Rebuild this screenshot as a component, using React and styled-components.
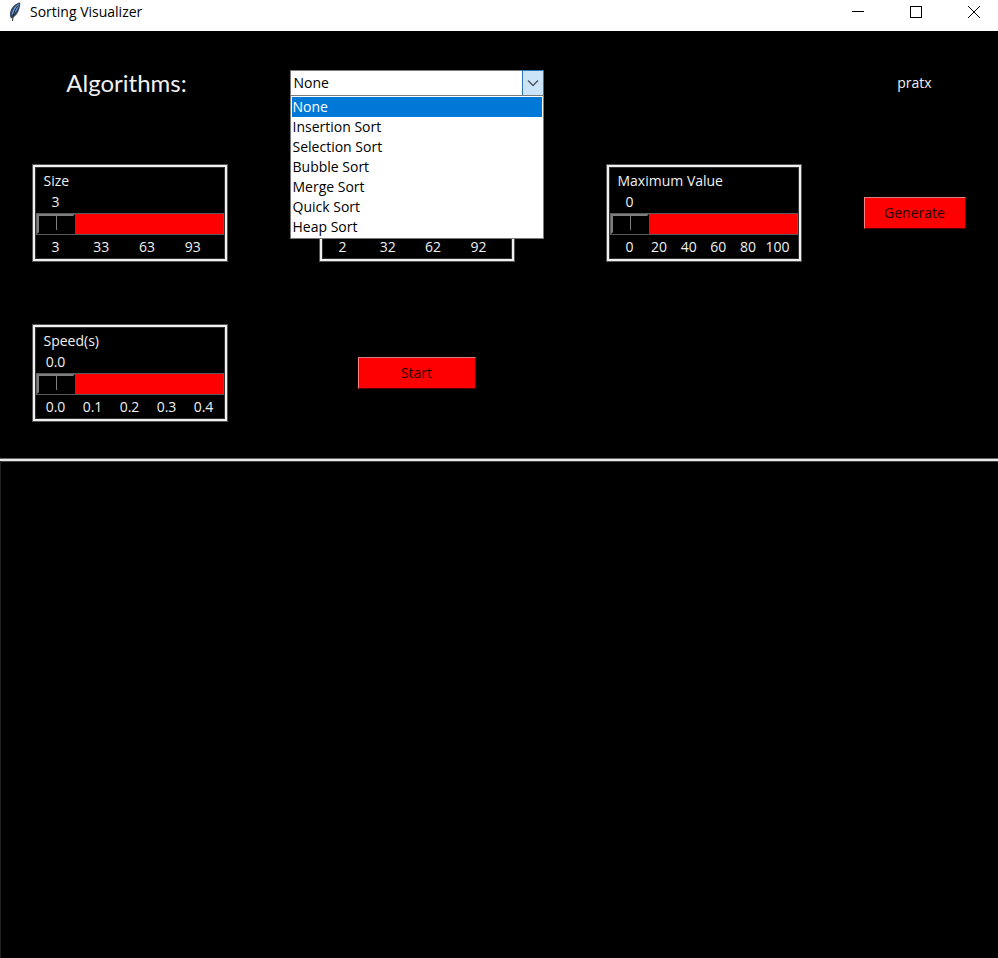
import React, { useState } from "react";
import styled, { createGlobalStyle } from "styled-components";

const GlobalStyle = createGlobalStyle`
  *, *::before, *::after { box-sizing: border-box; }
  html, body { margin: 0; background: #000; }
  body { font-family: "Open Sans", "Noto Sans", sans-serif; font-size: 14px; line-height: 20px; }
`;

const Window = styled.div`
  min-height: 100vh;
  display: flex;
  flex-direction: column;
  background: #000;
  color: #f0f0f0;
`;

const TitleBar = styled.header`
  display: flex;
  align-items: center;
  height: 31px;
  padding: 0 0 7px 8px;
  gap: 8px;
  background: #fff;
  color: #000;
`;

const Title = styled.h1`
  flex: 1;
  margin: 0;
  font-size: 14px;
  font-weight: 400;
  line-height: 20px;
`;

const WindowButton = styled.button`
  display: grid;
  place-items: center;
  width: 48px;
  height: 24px;
  margin-left: 2px;
  padding: 0;
  border: 0;
  background: none;
`;

const Controls = styled.main`
  display: grid;
  grid-template-columns: 259fr 315fr 259fr 163fr;
  grid-template-rows: 100px 160px 160px;
  place-items: center;
  padding: 2px 2px 6px 0;
  border-bottom: 2px solid #e8e8e8;
  box-shadow: inset 0 -1px #666, 0 1px #444;
`;

const Heading = styled.label`
  padding-right: 6px;
  font-family: Lato, Carlito, sans-serif;
  font-size: 24px;
  line-height: 28px;
`;

const Combo = styled.div`
  position: relative;
  width: 254px;
`;

const ComboSelect = styled.select`
  display: block;
  width: 100%;
  height: 26px;
  padding: 0 32px 0 3px;
  appearance: none;
  border: 1px solid #7a7a7a;
  border-radius: 0;
  outline: 0;
  background: #fff;
  color: #000;
  font: inherit;
`;

const ComboArrow = styled.span`
  position: absolute;
  top: 0;
  right: 0;
  display: grid;
  place-items: center;
  width: 22px;
  height: 26px;
  border: 1px solid #2a74b8;
  background: #cce4f7;
  pointer-events: none;
`;

const Options = styled.ul`
  position: absolute;
  z-index: 1;
  top: 25px;
  left: 0;
  right: 0;
  margin: 0;
  padding: 1px;
  list-style: none;
  border: 1px solid #7a7a7a;
  background: #fff;
  color: #000;
`;

const Option = styled.li`
  height: 20px;
  padding: 0 1px;
  line-height: 20px;
  background: ${(p) => (p["aria-selected"] ? "#0078d7" : "transparent")};
  color: ${(p) => (p["aria-selected"] ? "#fff" : "#000")};
`;

const Author = styled.p`
  margin: 0;
`;

const ScaleCard = styled.div`
  display: flex;
  flex-direction: column;
  width: 194px;
  height: 96px;
  padding: 2px 1px 0;
  border: 2px solid #f0f0f0;
  box-shadow: 0 0 0 1px #555, inset 0 0 0 1px #333;
`;

const ScaleLabel = styled.label`
  padding: 2px 8px 0;
  line-height: 20px;
  visibility: ${(p) => (p.$covered ? "hidden" : "visible")};
`;

const Rail = styled.div`
  display: flex;
  margin: 0 20px;
  line-height: ${(p) => p.$height}px;
  visibility: ${(p) => (p.$covered ? "hidden" : "visible")};
`;

const Mark = styled.output`
  display: flex;
  justify-content: center;
  width: 0;
  white-space: nowrap;
`;

const Slider = styled.input`
  appearance: none;
  display: block;
  width: 100%;
  height: 22px;
  margin: 0;
  border: 1px solid #5a5a5a;
  background: #f00;
  outline: 0;

  &::-webkit-slider-thumb {
    appearance: none;
    width: 38px;
    height: 20px;
    border: 2px solid #000;
    border-top-color: #7f7f7f;
    border-left-color: #7f7f7f;
    border-radius: 0;
    background: linear-gradient(#7f7f7f, #7f7f7f) 17px 0 / 1px 14px no-repeat #000;
  }
`;

const ActionButton = styled.button`
  width: ${(p) => p.$width}px;
  height: 32px;
  padding: 0;
  border: 1px solid #500;
  border-top-color: #d08080;
  border-left-color: #ff8080;
  border-radius: 0;
  background: #f00;
  color: #200;
  font: inherit;
`;

const Canvas = styled.section`
  flex: 1;
  border-left: 1px solid #202020;
`;

const algorithms = [
  "None",
  "Insertion Sort",
  "Selection Sort",
  "Bubble Sort",
  "Merge Sort",
  "Quick Sort",
  "Heap Sort",
];

function Scale({ id, label, min, max, step = 1, ticks, digits = 0, covered = false }) {
  const [value, setValue] = useState(min);
  const span = max - min;
  return (
    <ScaleCard>
      <ScaleLabel htmlFor={id} $covered={covered}>{label}</ScaleLabel>
      <Rail $height={22} $covered={covered}>
        <Mark htmlFor={id} style={{ marginLeft: `${((value - min) / span) * 100}%` }}>
          {value.toFixed(digits)}
        </Mark>
      </Rail>
      <Slider
        id={id}
        type="range"
        min={min}
        max={max}
        step={step}
        value={value}
        onChange={(e) => setValue(Number(e.target.value))}
      />
      <Rail $height={24}>
        {ticks.map((tick, i) => (
          <Mark
            as="span"
            key={tick}
            style={{ marginLeft: i ? `${((tick - ticks[i - 1]) / span) * 100}%` : 0 }}
          >
            {tick.toFixed(digits)}
          </Mark>
        ))}
      </Rail>
    </ScaleCard>
  );
}

function Feather() {
  return (
    <svg width="14" height="20" viewBox="0 0 14 20" aria-hidden="true">
      <path d="M12 0.500C8 1 4 4.500 2.500 9C1.600 12 1.800 14 3 16.500C7 15 9.500 12 11 8C12 5 12.500 2 12 0.500Z" fill="#34455f" />
      <path d="M11 1.800C7.500 3.500 4.500 7.500 3.500 13C7.500 11 10.500 7 11 1.800Z" fill="#6a9de0" />
      <path d="M10 3.500C7 7 5 12 4.500 19" fill="none" stroke="#20262e" strokeWidth="1" />
    </svg>
  );
}

export default function App() {
  const [algorithm, setAlgorithm] = useState("None");
  const [open, setOpen] = useState(true);
  const choose = (name) => {
    setAlgorithm(name);
    setOpen(false);
  };
  return (
    <Window>
      <GlobalStyle />
      <TitleBar>
        <Feather />
        <Title>Sorting Visualizer</Title>
        <WindowButton aria-label="Minimize">
          <svg width="12" height="12" shapeRendering="crispEdges"><path d="M0 5.500H12" stroke="#000" /></svg>
        </WindowButton>
        <WindowButton aria-label="Maximize">
          <svg width="12" height="12" shapeRendering="crispEdges"><path d="M.5 .5H11.500V11.500H.5Z" fill="none" stroke="#000" /></svg>
        </WindowButton>
        <WindowButton aria-label="Close">
          <svg width="12" height="12"><path d="M0 0L12 12M12 0L0 12" stroke="#000" /></svg>
        </WindowButton>
      </TitleBar>
      <Controls>
        <Heading htmlFor="algorithm">Algorithms:</Heading>
        <Combo>
          <ComboSelect id="algorithm" value={algorithm} onChange={(e) => choose(e.target.value)}>
            {algorithms.map((name) => <option key={name}>{name}</option>)}
          </ComboSelect>
          <ComboArrow>
            <svg width="12" height="8"><path d="M1 1.500L6 6.500L11 1.500" fill="none" stroke="#505860" strokeWidth="1.500" /></svg>
          </ComboArrow>
          {open && (
            <Options role="listbox" aria-label="Algorithms">
              {algorithms.map((name) => (
                <Option key={name} role="option" aria-selected={name === algorithm} onClick={() => choose(name)}>
                  {name}
                </Option>
              ))}
            </Options>
          )}
        </Combo>
        <span />
        <Author>pratx</Author>

        <Scale id="size" label="Size" min={3} max={100} ticks={[3, 33, 63, 93]} />
        <Scale id="minimum" label="Minimum Value" min={2} max={100} ticks={[2, 32, 62, 92]} covered={open} />
        <Scale id="maximum" label="Maximum Value" min={0} max={100} ticks={[0, 20, 40, 60, 80, 100]} />
        <ActionButton $width={102}>Generate</ActionButton>

        <Scale id="speed" label="Speed(s)" min={0} max={0.4} step={0.1} digits={1} ticks={[0, 0.1, 0.2, 0.3, 0.4]} />
        <ActionButton $width={118}>Start</ActionButton>
      </Controls>
      <Canvas aria-label="Sorting canvas" />
    </Window>
  );
}
